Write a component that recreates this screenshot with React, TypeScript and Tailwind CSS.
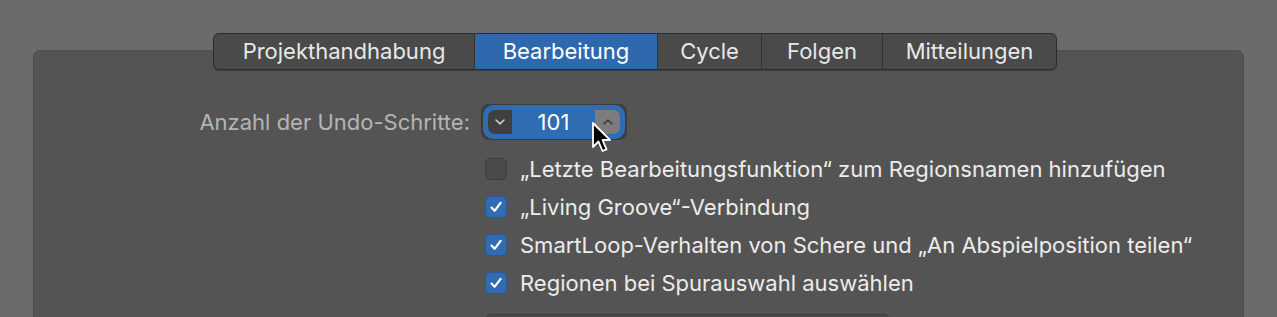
import React from "react";

const font = { fontFamily: "Inter, 'Noto Sans', 'Liberation Sans', sans-serif" };

function Check() {
  return (
    <svg width="14" height="14" viewBox="0 0 14 14" fill="none">
      <path d="M2.5 7.6 L5.6 10.8 L11.6 2.8" stroke="white" strokeWidth="2.2" strokeLinecap="round" strokeLinejoin="round" />
    </svg>
  );
}

function Row({ checked, label }: { checked: boolean; label: string }) {
  return (
    <div className="flex h-[38px] items-center gap-[13px]">
      {checked ? (
        <div className="flex h-[22px] w-[22px] shrink-0 items-center justify-center rounded-[5px] border border-[#2a5a95] bg-[#2f6cb2]">
          <Check />
        </div>
      ) : (
        <div className="h-[22px] w-[22px] shrink-0 rounded-[5px] border border-[#3d3d3d] bg-[#4a4a4a]" />
      )}
      <span className="whitespace-nowrap text-[22px] text-[#ececec]">{label}</span>
    </div>
  );
}

export default function App() {
  const tabs = [
    { name: "Projekthandhabung", w: 260 },
    { name: "Bearbeitung", w: 183, active: true },
    { name: "Cycle", w: 104 },
    { name: "Folgen", w: 121 },
    { name: "Mitteilungen", w: 174 },
  ];
  return (
    <div className="relative h-[317px] w-[1277px] overflow-hidden bg-[#6b6b6b] pt-[33px]" style={font}>
      <div className="relative z-10 ml-[213px] flex h-[37px] w-fit overflow-hidden rounded-[6px] border border-[#2c2c2c] bg-[#4a4a4a] shadow-[0_1px_1px_rgba(0,0,0,0.25)]">
        {tabs.map((t, i) => (
          <div
            key={t.name}
            className={
              "flex items-center justify-center text-[22px] " +
              (i > 0 ? "border-l border-[#333333] " : "") +
              (t.active ? "bg-[#2f69ad] text-white" : "text-[#e8e8e8]")
            }
            style={{ width: t.w }}
          >
            {t.name}
          </div>
        ))}
      </div>
      <div className="mx-[33px] -mt-[20px] h-[300px] rounded-[7px] border border-[#4c4c4c] bg-[#545454] pt-[52px]">
        <div className="flex h-[38px] items-center">
          <div className="w-[436px] whitespace-nowrap text-right text-[22px] text-[#b4b4b4]">Anzahl der Undo-Schritte:</div>
          <div className="ml-[11px] flex h-[36px] items-center rounded-[8px] bg-[#3c3c3c] px-[2px]">
            <div className="flex h-[34px] items-center rounded-[10px] bg-[#2f6cb2] px-[5px]">
              <div className="flex h-[24px] w-[24px] items-center justify-center rounded-l-[7px] bg-[#404040]">
                <svg width="14" height="10" viewBox="0 0 14 10" fill="none">
                  <path d="M3 3 L7 6.8 L11 3" stroke="#cfcfcf" strokeWidth="1.6" strokeLinecap="round" strokeLinejoin="round" />
                </svg>
              </div>
              <div className="flex h-[24px] w-[83px] items-center justify-center text-[22px] text-white">101</div>
              <div className="flex h-[24px] w-[25px] items-center justify-center rounded-r-[7px] bg-[#7c7c7c]">
                <svg width="14" height="10" viewBox="0 0 14 10" fill="none">
                  <path d="M3 6.8 L7 3 L11 6.8" stroke="#3a3a3a" strokeWidth="1.6" strokeLinecap="round" strokeLinejoin="round" />
                </svg>
              </div>
            </div>
          </div>
        </div>
        <div className="ml-[451px] mt-[9px] flex flex-col">
          <Row checked={false} label="„Letzte Bearbeitungsfunktion“ zum Regionsnamen hinzufügen" />
          <Row checked={true} label="„Living Groove“-Verbindung" />
          <Row checked={true} label="SmartLoop-Verhalten von Schere und „An Abspielposition teilen“" />
          <Row checked={true} label="Regionen bei Spurauswahl auswählen" />
          <div className="mt-[12px] h-[30px] w-[405px] rounded-[6px] border border-[#3e3e3e] bg-[#4a4a4a]" />
        </div>
      </div>
      <svg className="absolute left-[591px] top-[121px] z-20" width="24" height="34" viewBox="0 0 24 34">
        <path d="M2 2 L2 26 L7.5 20.5 L11.5 30 L15.5 28.3 L11.5 19 L19 19 Z" fill="black" stroke="white" strokeWidth="1.8" strokeLinejoin="round" />
      </svg>
    </div>
  );
}
